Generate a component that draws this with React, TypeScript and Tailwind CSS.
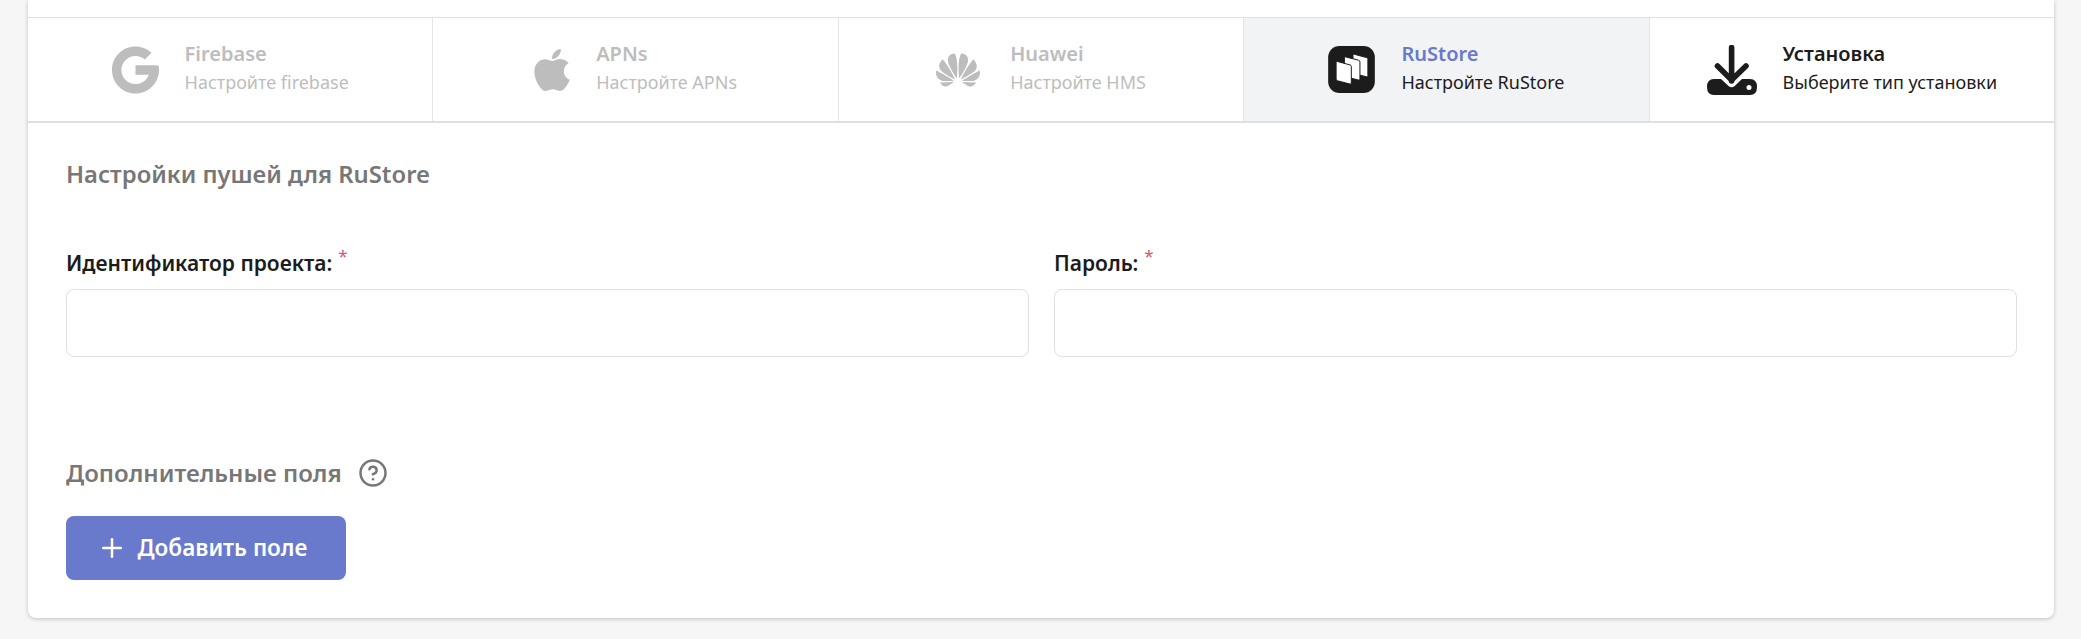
import React from 'react';
import { CircleHelp, Plus } from 'lucide-react';
import { FaApple } from 'react-icons/fa';
import { SiHuawei } from 'react-icons/si';

const GoogleIcon = () => (
  <svg viewBox="4 4 40 40" className="h-[48px] w-[47px] fill-[#bdbdbd]">
    <path d="M43.611 20.083H42V20H24v8h11.303c-1.649 4.657-6.08 8-11.303 8-6.627 0-12-5.373-12-12s5.373-12 12-12c3.059 0 5.842 1.154 7.961 3.039l5.657-5.657C34.046 6.053 29.268 4 24 4 12.955 4 4 12.955 4 24s8.955 20 20 20 20-8.955 20-20c0-1.341-.138-2.65-.389-3.917z" />
  </svg>
);

const RuStoreIcon = () => (
  <svg viewBox="0 0 141 142" className="h-[47px] w-[47px]">
    <rect width="141" height="142" rx="34" fill="#1c1c1c" />
    <g fill="#fff" stroke="#1c1c1c" strokeWidth="3" strokeLinejoin="round">
      <path d="M75 28 Q75 24 79 25 L116 35 Q120 36 120 40 L120 90 Q120 94 116 93 L75 83Z" />
      <path d="M49 36 Q49 32 53 33 L92 43 Q96 44 96 48 L96 100 Q96 104 92 103 L49 92Z" />
      <path d="M24 50 Q24 46 28 47 L66 57 Q70 58 70 62 L70 112 Q70 116 66 115 L28 105 Q24 104 24 100Z" />
    </g>
  </svg>
);

const InstallIcon = () => (
  <svg viewBox="0 0 50 50" className="h-[50px] w-[50px]">
    <path d="M24.6 2.5V36M10.5 21L24.6 35L39 21" fill="none" stroke="#1c1c1c" strokeWidth="5.6" strokeLinecap="round" strokeLinejoin="round" />
    <path d="M7 34H14L21.5 41Q24.6 43.5 27.7 41L35 34H43Q50 34 50 42Q50 50 43 50H7Q0 50 0 42Q0 34 7 34Z" fill="#1c1c1c" />
    <circle cx="42" cy="42.5" r="2.5" fill="#fff" />
  </svg>
);

const tabs = [
  { title: 'Firebase', subtitle: 'Настройте firebase', icon: <GoogleIcon />, state: 'off' },
  { title: 'APNs', subtitle: 'Настройте APNs', icon: <FaApple className="h-[48px] w-[36px] text-[#bdbdbd]" />, state: 'off' },
  { title: 'Huawei', subtitle: 'Настройте HMS', icon: <SiHuawei className="mr-[4px] h-[44px] w-[44px] text-[#bdbdbd]" />, state: 'off' },
  { title: 'RuStore', subtitle: 'Настройте RuStore', icon: <RuStoreIcon />, state: 'active' },
  { title: 'Установка', subtitle: 'Выберите тип установки', icon: <InstallIcon />, state: 'on' },
];

const Field = ({ label }: { label: string }) => (
  <div>
    <div className="mb-[12px] h-[28px] text-[21px] leading-[28px] font-semibold text-[#1c1c1c]">
      {label}
      <span className="relative -top-[9px] ml-[6px] text-[17px] font-normal text-[#d4566f]">*</span>
    </div>
    <div className="h-[68px] rounded-[8px] border border-[#e0e0e0] bg-white" />
  </div>
);

export default function App() {
  return (
    <div className="h-[639px] bg-[#f6f6f6] pl-[28px] pr-[27px] font-['Noto_Sans',sans-serif]">
      <div className="rounded-b-[8px] bg-white shadow-[0_1px_4px_rgba(0,0,0,0.22)]">
        <div className="h-[18px] border-b border-[#e0e0e0]" />
        <div className="flex h-[105px] border-b-2 border-[#e0e0e0]">
          {tabs.map((tab) => (
            <div
              key={tab.title}
              className={
                'flex flex-1 items-center justify-center gap-[26px] border-r border-[#e6e6e6] last:border-r-0 ' +
                (tab.state === 'active' ? 'bg-[#f2f3f5]' : '')
              }
            >
              {tab.icon}
              <div className="pb-[3px]">
                <div
                  className={
                    'text-[20px] leading-[29px] font-semibold ' +
                    (tab.state === 'off' ? 'text-[#bdbdbd]' : tab.state === 'active' ? 'text-[#6979cc]' : 'text-[#1c1c1c]')
                  }
                >
                  {tab.title}
                </div>
                <div className={'text-[18px] leading-[29px] ' + (tab.state === 'off' ? 'text-[#bdbdbd]' : 'text-[#1c1c1c]')}>
                  {tab.subtitle}
                </div>
              </div>
            </div>
          ))}
        </div>
        <div className="pt-[36px] pr-[37px] pb-[38px] pl-[38px]">
          <div className="mb-[60px] text-[23.8px] leading-[30px] font-semibold text-[#777777]">Настройки пушей для RuStore</div>
          <div className="grid grid-cols-[963px_963px] gap-[25px]">
            <Field label="Идентификатор проекта:" />
            <Field label="Пароль:" />
          </div>
          <div className="mt-[101px] mb-[28px] flex h-[30px] items-center gap-[16px]">
            <span className="text-[24px] leading-[30px] font-semibold text-[#777777]">Дополнительные поля</span>
            <CircleHelp className="h-[30px] w-[30px] text-[#777777]" strokeWidth={2} />
          </div>
          <button className="flex h-[64px] w-[280px] items-center justify-center gap-[11px] rounded-[8px] bg-[#6979cc] pr-[8px] text-[22.5px] font-semibold text-white">
            <Plus className="h-[30px] w-[30px]" strokeWidth={2} />
            Добавить поле
          </button>
        </div>
      </div>
    </div>
  );
}
